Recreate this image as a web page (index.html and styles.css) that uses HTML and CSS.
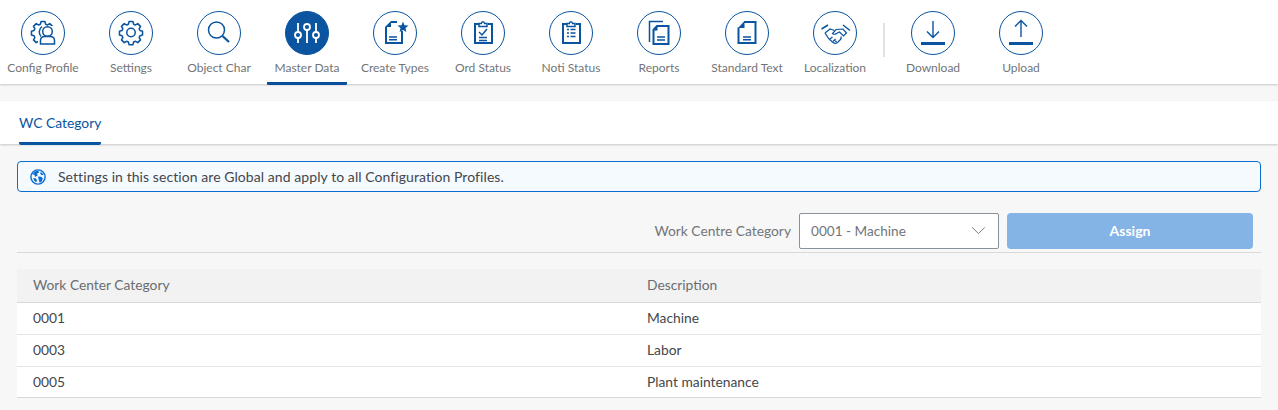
FILE: index.html
```html
<!DOCTYPE html>
<html lang="en">
<head>
<meta charset="utf-8">
<title>Master Data</title>
<link rel="stylesheet" href="styles.css">
</head>
<body>
<svg class="defs" width="0" height="0" aria-hidden="true"><defs>
  <path id="gear" d="M19.500 9.500h5l.8 3.300 2.500 1 2.900-1.700 3.500 3.500-1.700 2.900 1 2.500 3.300.8v5l-3.300.8-1 2.500 1.700 2.900-3.500 3.500-2.900-1.700-2.500 1-.8 3.300h-5l-.8-3.300-2.500-1-2.900 1.700-3.500-3.500 1.700-2.900-1-2.500-3.300-.8v-5l3.300-.8 1-2.500-1.700-2.900 3.500-3.500 2.900 1.700 2.500-1z"/>
  <clipPath id="gearclip"><path d="M0 0h44v15H26c-5 0-9 4-9 9v20H0z"/></clipPath>
</defs></svg>
<nav class="topnav">
  <a class="navitem"><span class="circle"><svg viewBox="0 0 44 44" class="ico"><g clip-path="url(#gearclip)"><use href="#gear" class="s gearstroke" transform="translate(22 21.500) scale(.78) translate(-22 -23.500)"/></g><path d="M21 15.500c-3.200 2.500-3.600 7-1 10" class="s"/><circle cx="26.500" cy="20.500" r="4.800" class="s"/><path d="M19.500 33v-3.500c0-2.500 2-4 4.500-4h5c2.500 0 4.500 1.500 4.500 4V33z" class="s"/></svg></span><span class="lbl">Config Profile</span></a>
  <a class="navitem"><span class="circle"><svg viewBox="0 0 44 44" class="ico"><use href="#gear" class="s gearstroke" transform="translate(22 21.500) scale(.78) translate(-22 -23.500)"/><circle cx="22" cy="21.500" r="4.200" class="s"/></svg></span><span class="lbl">Settings</span></a>
  <a class="navitem"><span class="circle"><svg viewBox="0 0 44 44" class="ico"><circle cx="19.500" cy="19" r="8" class="s"/><path d="M25.500 25l6.500 6" class="s thick"/></svg></span><span class="lbl">Object Char</span></a>
  <a class="navitem active"><span class="circle"><svg viewBox="0 0 44 44" class="ico"><path d="M13 12v9M13 27v5M22 12v1M22 19v13M31 12v9M31 27v5" class="w"/><circle cx="13" cy="24" r="3" class="w"/><circle cx="22" cy="16" r="3" class="w"/><circle cx="31" cy="24" r="3" class="w"/></svg></span><span class="lbl">Master Data</span></a>
  <a class="navitem"><span class="circle"><svg viewBox="0 0 44 44" class="ico"><path d="M18 11h6M13 16v16h16V20" class="s doc"/><path d="M18 10l-6 6h6z" class="f"/><path d="M16 26h8M16 28.800h8" class="s"/><path d="M30 10.500l1.500 3.700 4 .3-3 2.600.9 3.900-3.400-2.100-3.400 2.100.9-3.900-3-2.600 4-.3z" class="f"/></svg></span><span class="lbl">Create Types</span></a>
  <a class="navitem"><span class="circle"><svg viewBox="0 0 44 44" class="ico"><path d="M18 13h-4v19h17V13h-4" class="s doc"/><path d="M18 15.500v-3h2.300c.4-2.500 2.900-2.500 3.300 0H26v3z" class="s"/><path d="M18 21l3 3 5-6" class="s"/><path d="M18 26.500h8M18 29.500h8" class="s"/></svg></span><span class="lbl">Ord Status</span></a>
  <a class="navitem"><span class="circle"><svg viewBox="0 0 44 44" class="ico"><path d="M18 13h-4v19h17V13h-4" class="s doc"/><path d="M18 15.500v-3h2.300c.4-2.500 2.900-2.500 3.300 0H26v3z" class="s"/><path d="M18 18.500h2M21.500 18.500h5M18 22h2M21.500 22h5M18 25.500h2M21.500 25.500h5" class="s"/></svg></span><span class="lbl">Noti Status</span></a>
  <a class="navitem"><span class="circle"><svg viewBox="0 0 44 44" class="ico"><path d="M26 10.500H12.500V31" class="s"/><path d="M20 15h11.500v18H16.500V19z" class="s doc"/><path d="M20.500 14.500v5h-5z" class="f"/><path d="M20 26h8M20 29h8" class="s"/></svg></span><span class="lbl">Reports</span></a>
  <a class="navitem"><span class="circle"><svg viewBox="0 0 44 44" class="ico"><path d="M19 11h11.500v21h-17V16.500" class="s doc"/><path d="M19.500 10v7H13z" class="f"/><path d="M18 26h8M18 28.800h8" class="s"/></svg></span><span class="lbl">Standard Text</span></a>
  <a class="navitem"><span class="circle"><svg viewBox="0 0 44 44" class="ico"><path d="M8.500 18l6.500-4M30 14l7 5.500" class="s"/><g transform="translate(0 1.500)"><path d="M12 20.500l5-4 4.500 1.500" class="s thin"/><path d="M33.500 20.500l-3.500-4-7 .5-3.500 4c1 1 3 1 4 0l3-1.500 4 4 3-3z" class="s thin"/><path d="M12 20.500c1.500 3 4 6.500 8 9.500 1.500 1.200 3 1.200 4.500 0l2.500-2.500c1-1 1.500-2.500 .8-3.500" class="s thin"/><path d="M17 26.500l2.500-2M20 29l2.500-2.500M23.500 29.500l-2-2" class="s thin"/></g></svg></span><span class="lbl">Localization</span></a>
  <span class="divider"></span>
  <a class="navitem"><span class="circle"><svg viewBox="0 0 44 44" class="ico"><path d="M22 10v16M16 20.500l6 6 6-6" class="s arrow"/><path d="M10 32.500h24" class="s thick3"/></svg></span><span class="lbl">Download</span></a>
  <a class="navitem"><span class="circle"><svg viewBox="0 0 44 44" class="ico"><path d="M22 26V10M16 15.500l6-6 6 6" class="s arrow"/><path d="M10 32.500h24" class="s thick3"/></svg></span><span class="lbl">Upload</span></a>
</nav>

<div class="tabbar"><a class="tab">WC Category</a></div>

<main class="content">
  <div class="strip">
    <svg viewBox="0 0 18 18" class="globe"><circle cx="9" cy="9" r="8" class="gs"/><path d="M2.500 6l3.500-3.500 3.500-.5.800 2-2.300 1 .5 2.200-2.800 1.800-.7-2.500zM9 8.500l3.500.3 2 1.700-1.200 3.200-2.300 2-1.200-3.500zM12 3l3.500 3.500-2.200.6-1.800-1.600zM3.500 10l2.800.5 1.700 2.200-1 2.300-1.800-1.300z" class="gf"/></svg>
    <span class="striptext">Settings in this section are Global and apply to all Configuration Profiles.</span>
  </div>
  <div class="formrow">
    <label class="flabel">Work Centre Category</label>
    <div class="select"><span>0001 - Machine</span><svg viewBox="0 0 16 10" class="chev"><path d="M1 1.500l7 7 7-7"/></svg></div>
    <button class="assign">Assign</button>
  </div>
  <div class="table">
    <div class="row head"><span>Work Center Category</span><span>Description</span></div>
    <div class="row"><span>0001</span><span>Machine</span></div>
    <div class="row"><span>0003</span><span>Labor</span></div>
    <div class="row"><span>0005</span><span>Plant maintenance</span></div>
  </div>
</main>
</body>
</html>
```
FILE: styles.css
```css
* { box-sizing: border-box; }
html, body { margin: 0; height: 100%; overflow: hidden; }
body { background: #f7f7f7; font-family: Lato, "Noto Sans", sans-serif; color: #32363a; }
.defs { position: absolute; }

.topnav { display: flex; gap: 8px; height: 84px; padding-left: 3px; background: #fff; box-shadow: 0 1px 2px rgba(0,0,0,.2); position: relative; }
.navitem { width: 80px; flex: none; display: flex; flex-direction: column; align-items: center; padding-top: 11px; height: 85px; border-bottom: 3px solid transparent; border-radius: 0 0 1px 1px; }
.navitem.active { border-bottom-color: #0a4f9e; }
.circle { width: 44px; height: 44px; border-radius: 50%; border: 1px solid #0a54a0; display: block; flex: none; }
.active .circle { background: #0a54a0; }
.ico { display: block; width: 44px; height: 44px; margin: -1px; }
.s { fill: none; stroke: #0a54a0; stroke-width: 1.500; }
.gearstroke { stroke-width: 2; stroke-linejoin: round; }
.doc { stroke-width: 2; }
.thin { stroke-width: 1.200; }
.arrow { stroke-width: 1.400; }
.f { fill: #0a54a0; }
.w { fill: none; stroke: #fff; stroke-width: 1.800; }
.thick { stroke-width: 2.200; }
.thick3 { stroke-width: 3; }
.lbl { font-size: 12px; line-height: 14px; margin-top: 6px; color: #727578; white-space: nowrap; }
.divider { width: 2px; height: 34px; margin-top: 23px; background: #e2e2e2; flex: none; }

.tabbar { margin-top: 17px; height: 43px; background: #fff; padding-left: 19px; box-shadow: 0 1px 2px rgba(0,0,0,.2); position: relative; }
.tab { display: inline-block; height: 44px; padding-top: 13px; font-size: 13.850px; line-height: 18px; color: #0a54a0; border-bottom: 3px solid #0a54a0; border-radius: 0 0 2px 2px; }

.content { padding: 17px 17px 0; }
.strip { height: 31px; display: flex; align-items: center; gap: 12px; padding-left: 12px; background: #f5faff; border: 1px solid #0a6ed1; border-radius: 4px; font-size: 14px; color: #43474b; }
.striptext { letter-spacing: .07px; }
.globe { width: 16px; height: 16px; flex: none; }
.gs { fill: none; stroke: #0a6ed1; stroke-width: 1.600; }
.gf { fill: #0a6ed1; }

.formrow { display: flex; justify-content: flex-end; align-items: center; gap: 8px; margin-top: 21px; height: 40px; padding: 0 8px 4px 0; border-bottom: 1px solid #d9d9d9; }
.flabel { font-size: 13.800px; color: #727578; }
.select { width: 200px; height: 36px; background: #fff; border: 1px solid #89919a; border-radius: 2px; display: flex; align-items: center; justify-content: space-between; padding: 0 12px 0 11px; font-size: 13.600px; color: #727578; }
.chev { width: 15px; height: 9px; }
.chev path { fill: none; stroke: #6a6d70; stroke-width: 1; }
.assign { width: 246px; height: 36px; border: 0; border-radius: 4px; background: #84b4e5; color: #fff; font: bold 14px Lato, sans-serif; }

.table { margin-top: 16px; }
.row { display: grid; grid-template-columns: 614px 1fr; align-items: center; height: 32px; padding: 0 0 2px 16px; background: #fff; border-bottom: 1px solid #e4e4e4; font-size: 13.800px; color: #43474b; }
.row:last-child { height: 31px; padding-bottom: 1px; border-bottom-color: #d9d9d9; }
.row.head { height: 34px; background: #f2f2f2; color: #6a6d70; border-bottom: 1px solid #d9d9d9; }
```
